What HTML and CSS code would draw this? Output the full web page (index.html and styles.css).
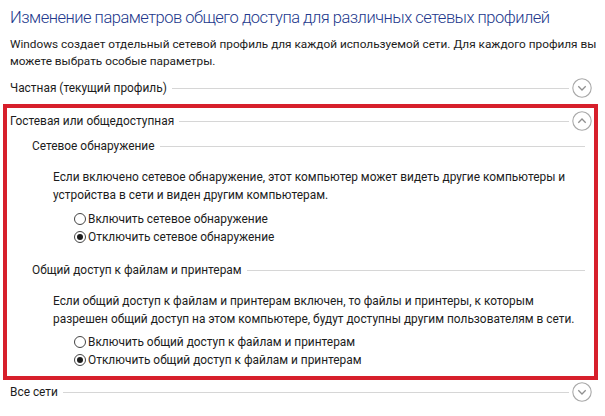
FILE: index.html
```html
<!DOCTYPE html>
<html lang="ru">
<head>
<meta charset="utf-8">
<title>Параметры общего доступа</title>
<link rel="stylesheet" href="styles.css">
</head>
<body>
<div class="page">
  <h1 class="title">Изменение параметров общего доступа для различных сетевых профилей</h1>
  <p class="intro">Windows создает отдельный сетевой профиль для каждой используемой сети. Для каждого профиля вы<br>можете выбрать особые параметры.</p>

  <div class="row row-top">
    <span class="row-label">Частная (текущий профиль)</span>
    <span class="rule"></span>
    <svg class="chev" viewBox="0 0 20 20" width="20" height="20"><circle cx="10" cy="10" r="9.2"/><path d="M6.3 8.3 L10 12 L13.7 8.3"/></svg>
  </div>

  <div class="box">
    <div class="row row-box">
      <span class="row-label">Гостевая или общедоступная</span>
      <span class="rule"></span>
      <svg class="chev" viewBox="0 0 20 20" width="20" height="20"><circle cx="10" cy="10" r="9.2"/><path d="M6.3 11.7 L10 8 L13.7 11.7"/></svg>
    </div>

    <div class="group">
      <div class="row sub">
        <span class="row-label">Сетевое обнаружение</span>
        <span class="rule"></span>
      </div>
      <p class="desc">Если включено сетевое обнаружение, этот компьютер может видеть другие компьютеры и<br>устройства в сети и виден другим компьютерам.</p>
      <div class="radios">
        <label class="radio"><span class="dot"></span>Включить сетевое обнаружение</label>
        <label class="radio on"><span class="dot"></span>Отключить сетевое обнаружение</label>
      </div>
    </div>

    <div class="group group2">
      <div class="row sub">
        <span class="row-label">Общий доступ к файлам и принтерам</span>
        <span class="rule"></span>
      </div>
      <p class="desc">Если общий доступ к файлам и принтерам включен, то файлы и принтеры, к которым<br>разрешен общий доступ на этом компьютере, будут доступны другим пользователям в сети.</p>
      <div class="radios">
        <label class="radio"><span class="dot"></span>Включить общий доступ к файлам и принтерам</label>
        <label class="radio on"><span class="dot"></span>Отключить общий доступ к файлам и принтерам</label>
      </div>
    </div>
  </div>

  <div class="row row-bottom">
    <span class="row-label">Все сети</span>
    <span class="rule"></span>
    <svg class="chev" viewBox="0 0 20 20" width="20" height="20"><circle cx="10" cy="10" r="9.2"/><path d="M6.3 8.3 L10 12 L13.7 8.3"/></svg>
  </div>
</div>
</body>
</html>
```

FILE: styles.css
```css
html, body {
  margin: 0;
  padding: 0;
  background: #ffffff;
}
body {
  font-family: Roboto, "Noto Sans", "Liberation Sans", sans-serif;
  font-size: 11.9px;
  color: #1c1c1c;
  width: 605px;
  height: 416px;
  overflow: hidden;
}
.page {
  padding-top: 6px;
}
.title {
  margin: 0 0 0 10px;
  height: 24px;
  line-height: 24px;
  font-size: 16.5px;
  font-weight: 300;
  letter-spacing: -0.5px;
  color: #22388c;
  white-space: nowrap;
}
.intro {
  margin: 6px 0 0 10px;
  line-height: 17px;
  font-size: 11.8px;
  white-space: nowrap;
}
.row {
  display: flex;
  align-items: center;
  height: 20px;
}
.row-label {
  white-space: nowrap;
  flex: none;
}
.rule {
  flex: 1;
  height: 1px;
  background: #d6d6d6;
  margin-left: 5px;
}
.chev {
  flex: none;
  margin-left: 3px;
  fill: none;
  stroke: #a9a9a9;
  stroke-width: 1.1;
}
.chev path {
  stroke: #8f8f8f;
  stroke-width: 1.3;
}
.row-top {
  margin: 8px 13px 0 10px;
}
.box {
  margin: 6px 7px 0 3px;
  border: 4px solid #d71f2b;
  padding: 3px 0 7px 3px;
}
.row-box {
  margin-right: 2px;
}
.group {
  padding-left: 22px;
}
.sub {
  margin-top: 5px;
  margin-right: 9px;
}
.group2 .sub {
  margin-top: 14px;
}
.desc {
  margin: 12px 0 0 21px;
  line-height: 18px;
  white-space: nowrap;
}
.radios {
  margin: 6px 0 0 42px;
}
.group2 .radios {
  margin-top: 5px;
}
.radio {
  display: flex;
  align-items: center;
  height: 18px;
}
.dot {
  box-sizing: border-box;
  width: 12px;
  height: 12px;
  border: 1px solid #444444;
  border-radius: 50%;
  margin-right: 2px;
  background: #ffffff;
  position: relative;
}
.radio.on .dot::after {
  content: "";
  position: absolute;
  left: 2px;
  top: 2px;
  width: 6px;
  height: 6px;
  border-radius: 50%;
  background: #1c1c1c;
}
.row-bottom {
  margin: 2px 13px 0 10px;
}
```
